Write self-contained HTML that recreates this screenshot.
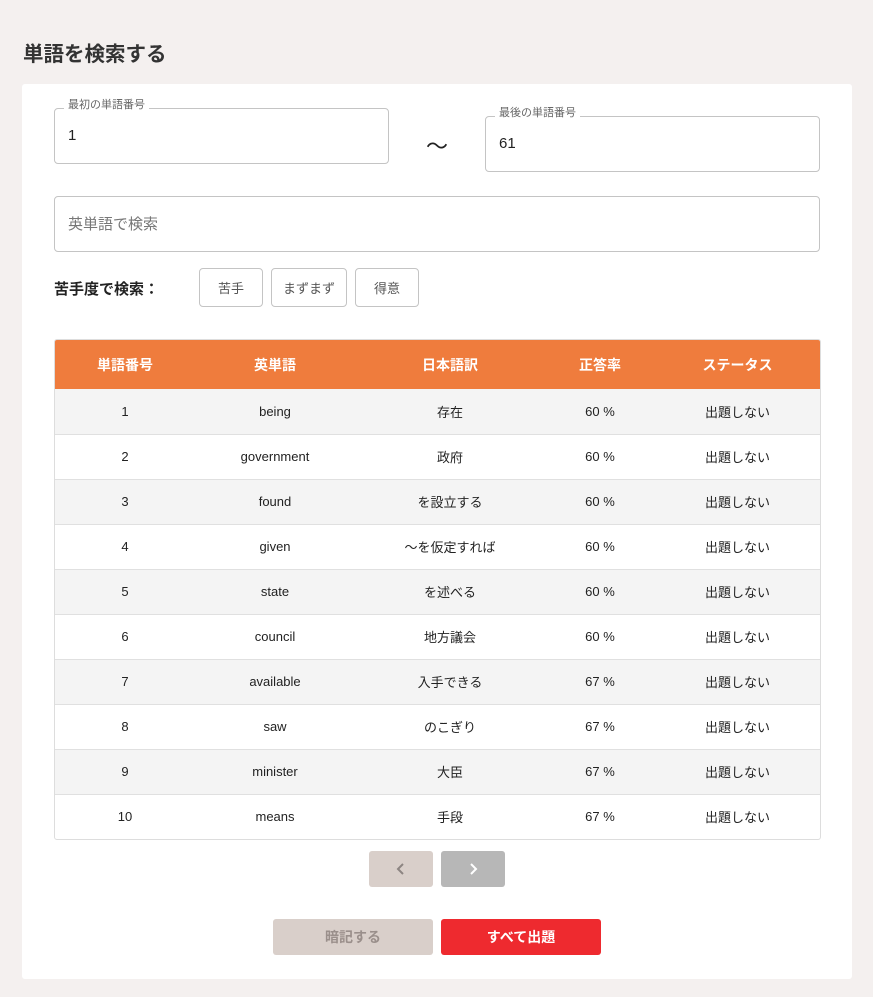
<!DOCTYPE html>
<html><head><meta charset="utf-8"><style>
*{box-sizing:border-box;margin:0;padding:0}
body{width:873px;height:997px;background:#f4f0ef;font-family:"Liberation Sans","Noto Sans CJK JP",sans-serif;position:relative;overflow:hidden;color:#222}
.a{position:absolute}
h1{position:absolute;left:23px;top:37px;font-size:20.5px;font-weight:bold;color:#333}
.card{left:22px;top:84px;width:830px;height:895px;background:#fff;border-radius:3px}
.inp{border:1px solid #c4c4c4;border-radius:4px;background:#fff}
.lbl{font-size:11px;color:#666;background:#fff;padding:0 4px;line-height:12px}
.btn{border:1px solid #c4c4c4;border-radius:4px;font-size:13px;color:#555;display:flex;align-items:center;justify-content:center}
table{border-collapse:collapse;width:765px;font-size:13px}
th{background:#ef7c3d;color:#fff;height:49px;font-weight:bold;font-size:14px}
td{height:45px;text-align:center;border-top:1px solid #e0e0e0}
tr:nth-child(even) td{background:#f4f4f4}
tr:nth-child(2) td{border-top:none}
</style></head><body>
<h1>単語を検索する</h1>
<div class="a card"></div>
<div class="a inp" style="left:54px;top:108px;width:335px;height:56px"></div>
<div class="a lbl" style="left:64px;top:99px">最初の単語番号</div>
<div class="a" style="left:68px;top:127px;font-size:15px">1</div>
<div class="a" style="left:426px;top:129px;font-size:22px">〜</div>
<div class="a inp" style="left:485px;top:116px;width:335px;height:56px"></div>
<div class="a lbl" style="left:495px;top:107px">最後の単語番号</div>
<div class="a" style="left:499px;top:135px;font-size:15px">61</div>
<div class="a inp" style="left:54px;top:196px;width:766px;height:56px"></div>
<div class="a" style="left:68px;top:213px;font-size:15px;color:#777">英単語で検索</div>
<div class="a" style="left:54px;top:278px;font-size:15px;font-weight:bold">苦手度で検索：</div>
<div class="a btn" style="left:199px;top:268px;width:64px;height:39px">苦手</div>
<div class="a btn" style="left:271px;top:268px;width:76px;height:39px">まずまず</div>
<div class="a btn" style="left:355px;top:268px;width:64px;height:39px">得意</div>
<div class="a" style="left:54px;top:339px;border:1px solid #ddd;border-radius:3px;overflow:hidden">
<table>
<tr><th style="width:140px">単語番号</th><th style="width:160px">英単語</th><th style="width:190px">日本語訳</th><th style="width:110px">正答率</th><th>ステータス</th></tr>
<tr><td>1</td><td>being</td><td>存在</td><td>60 %</td><td>出題しない</td></tr>
<tr><td>2</td><td>government</td><td>政府</td><td>60 %</td><td>出題しない</td></tr>
<tr><td>3</td><td>found</td><td>を設立する</td><td>60 %</td><td>出題しない</td></tr>
<tr><td>4</td><td>given</td><td>〜を仮定すれば</td><td>60 %</td><td>出題しない</td></tr>
<tr><td>5</td><td>state</td><td>を述べる</td><td>60 %</td><td>出題しない</td></tr>
<tr><td>6</td><td>council</td><td>地方議会</td><td>60 %</td><td>出題しない</td></tr>
<tr><td>7</td><td>available</td><td>入手できる</td><td>67 %</td><td>出題しない</td></tr>
<tr><td>8</td><td>saw</td><td>のこぎり</td><td>67 %</td><td>出題しない</td></tr>
<tr><td>9</td><td>minister</td><td>大臣</td><td>67 %</td><td>出題しない</td></tr>
<tr><td>10</td><td>means</td><td>手段</td><td>67 %</td><td>出題しない</td></tr>
</table></div>
<div class="a" style="left:369px;top:851px;width:64px;height:36px;background:#d9cfca;border-radius:3px;display:flex;align-items:center;justify-content:center"><svg width="10" height="12"><path d="M7 1L2 6L7 11" stroke="#8d8582" stroke-width="2" fill="none"/></svg></div>
<div class="a" style="left:441px;top:851px;width:64px;height:36px;background:#b7b7b7;border-radius:3px;display:flex;align-items:center;justify-content:center"><svg width="10" height="12"><path d="M3 1L8 6L3 11" stroke="#fff" stroke-width="2" fill="none"/></svg></div>
<div class="a" style="left:273px;top:919px;width:160px;height:36px;background:#d9cfca;border-radius:3px;color:#9a8f8b;font-size:14px;font-weight:bold;display:flex;align-items:center;justify-content:center">暗記する</div>
<div class="a" style="left:441px;top:919px;width:160px;height:36px;background:#ee2a2f;border-radius:3px;color:#fff;font-size:14px;font-weight:bold;display:flex;align-items:center;justify-content:center">すべて出題</div>
</body></html>
